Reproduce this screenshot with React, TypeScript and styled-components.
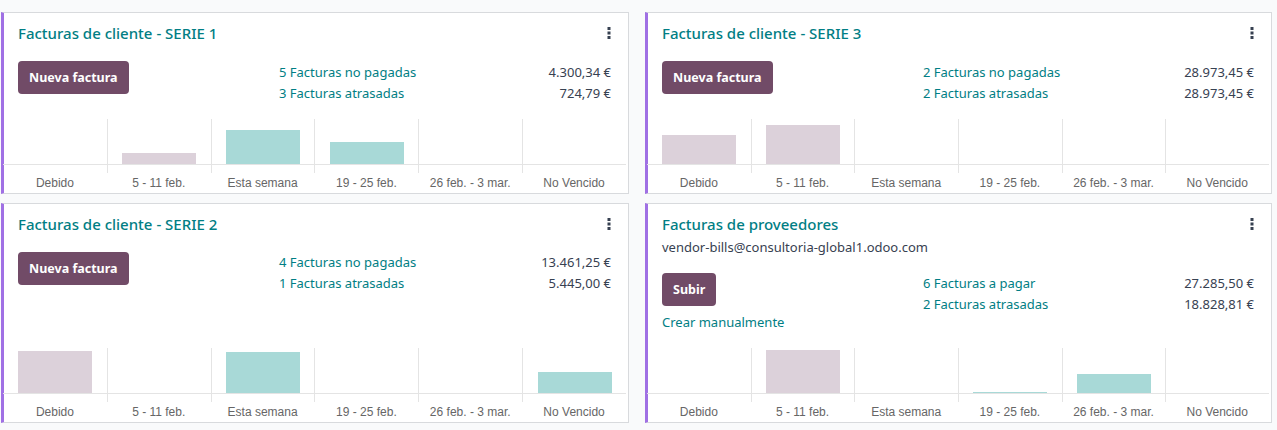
import React from "react";
import styled, { createGlobalStyle } from "styled-components";

const GlobalStyle = createGlobalStyle`
  html, body { margin: 0; padding: 0; }
  body {
    background: #f9fafb;
    font-family: "Noto Sans", "Open Sans", sans-serif;
    color: #374151;
  }
`;

const Grid = styled.div`
  display: grid;
  grid-template-columns: 628px 627px;
  column-gap: 16px;
  row-gap: 9px;
  padding: 12px 0 0 1px;
`;

const Card = styled.div`
  background: #ffffff;
  border: 1px solid #d8dadd;
  border-left: 3px solid #a070e4;
  display: flex;
  flex-direction: column;
`;

const Header = styled.div`
  display: flex;
  justify-content: space-between;
  align-items: center;
  padding: 10px 17px 0 14px;
`;

const Title = styled.div`
  font-size: 15px;
  font-weight: 500;
  line-height: 20px;
  color: #017e84;
`;

const Kebab = styled.svg`
  width: 4px;
  height: 12px;
  flex: none;
`;

const Email = styled.div`
  font-size: 13px;
  line-height: 20px;
  margin-top: 3px;
  padding: 0 17px 0 14px;
  color: #374151;
`;

const Main = styled.div<{ $top: number }>`
  display: grid;
  grid-template-columns: 261px 1fr;
  padding: 0 17px 0 14px;
  margin-top: ${(p) => p.$top}px;
`;

const ActionCol = styled.div`
  display: flex;
  flex-direction: column;
  align-items: flex-start;
`;

const PrimaryButton = styled.button`
  background: #714b67;
  color: #ffffff;
  border: none;
  border-radius: 4px;
  height: 33px;
  padding: 0 11px;
  font-family: inherit;
  font-size: 12.5px;
  font-weight: 700;
`;

const TextLink = styled.div`
  color: #017e84;
  font-size: 13px;
  line-height: 20px;
  margin: 6px 0 1px;
`;

const Stats = styled.div`
  display: flex;
  flex-direction: column;
  padding-top: 0.5px;
`;

const StatRow = styled.div`
  display: flex;
  justify-content: space-between;
  font-size: 13px;
  line-height: 21px;
`;

const StatLabel = styled.span`
  color: #017e84;
`;

const StatAmount = styled.span`
  color: #374151;
`;

const Chart = styled.div`
  display: flex;
  margin-top: auto;
  padding-top: 15px;
  margin-left: -1px;
  margin-right: 2px;
`;

const Column = styled.div`
  flex: 1;
  display: flex;
  flex-direction: column;
`;

const PlotCell = styled.div<{ $first: boolean }>`
  height: 54px;
  border-left: ${(p) => (p.$first ? "none" : "1px solid #e4e4e4")};
`;

const Plot = styled.div`
  height: 46px;
  border-bottom: 1px solid #e4e4e4;
  display: flex;
  align-items: flex-end;
  justify-content: center;
  box-sizing: border-box;
`;

const Bar = styled.div<{ $future: boolean }>`
  width: 72%;
  background: ${(p) => (p.$future ? "#a8d9d7" : "#dcd1da")};
  box-sizing: border-box;
`;

const AxisLabel = styled.div`
  height: 20px;
  line-height: 20px;
  text-align: center;
  font-family: "Liberation Sans", Arial, sans-serif;
  font-size: 12px;
  color: #666666;
`;

const LABELS = ["Debido", "5 - 11 feb.", "Esta semana", "19 - 25 feb.", "26 feb. - 3 mar.", "No Vencido"];

type Stat = { label: string; amount: string };
type CardData = {
  title: string;
  email?: string;
  button: string;
  link?: string;
  stats: Stat[];
  bars: number[];
};

const cards: CardData[] = [
  {
    title: "Facturas de cliente - SERIE 1",
    button: "Nueva factura",
    stats: [
      { label: "5 Facturas no pagadas", amount: "4.300,34 €" },
      { label: "3 Facturas atrasadas", amount: "724,79 €" },
    ],
    bars: [0, 11, 34, 22, 0, 0],
  },
  {
    title: "Facturas de cliente - SERIE 3",
    button: "Nueva factura",
    stats: [
      { label: "2 Facturas no pagadas", amount: "28.973,45 €" },
      { label: "2 Facturas atrasadas", amount: "28.973,45 €" },
    ],
    bars: [29, 39, 0, 0, 0, 0],
  },
  {
    title: "Facturas de cliente - SERIE 2",
    button: "Nueva factura",
    stats: [
      { label: "4 Facturas no pagadas", amount: "13.461,25 €" },
      { label: "1 Facturas atrasadas", amount: "5.445,00 €" },
    ],
    bars: [42, 0, 41, 0, 0, 21],
  },
  {
    title: "Facturas de proveedores",
    email: "vendor-bills@consultoria-global1.odoo.com",
    button: "Subir",
    link: "Crear manualmente",
    stats: [
      { label: "6 Facturas a pagar", amount: "27.285,50 €" },
      { label: "2 Facturas atrasadas", amount: "18.828,81 €" },
    ],
    bars: [0, 43, 0, 1, 19, 0],
  },
];

function KebabIcon() {
  return (
    <Kebab viewBox="0 0 4 12">
      <rect x="0.5" y="0" width="3" height="3" fill="#374151" />
      <rect x="0.5" y="4.5" width="3" height="3" fill="#374151" />
      <rect x="0.5" y="9" width="3" height="3" fill="#374151" />
    </Kebab>
  );
}

function JournalCard({ data }: { data: CardData }) {
  return (
    <Card>
      <Header>
        <Title>{data.title}</Title>
        <KebabIcon />
      </Header>
      {data.email && <Email>{data.email}</Email>}
      <Main $top={data.email ? 16 : 18}>
        <ActionCol>
          <PrimaryButton>{data.button}</PrimaryButton>
          {data.link && <TextLink>{data.link}</TextLink>}
        </ActionCol>
        <Stats>
          {data.stats.map((s) => (
            <StatRow key={s.label}>
              <StatLabel>{s.label}</StatLabel>
              <StatAmount>{s.amount}</StatAmount>
            </StatRow>
          ))}
        </Stats>
      </Main>
      <Chart>
        {LABELS.map((label, i) => (
          <Column key={label}>
            <PlotCell $first={i === 0}>
              <Plot>
                {data.bars[i] > 0 && (
                  <Bar $future={i >= 2} style={{ height: data.bars[i] }} />
                )}
              </Plot>
            </PlotCell>
            <AxisLabel>{label}</AxisLabel>
          </Column>
        ))}
      </Chart>
    </Card>
  );
}

export default function App() {
  return (
    <>
      <GlobalStyle />
      <Grid>
        {cards.map((c) => (
          <JournalCard key={c.title} data={c} />
        ))}
      </Grid>
    </>
  );
}
